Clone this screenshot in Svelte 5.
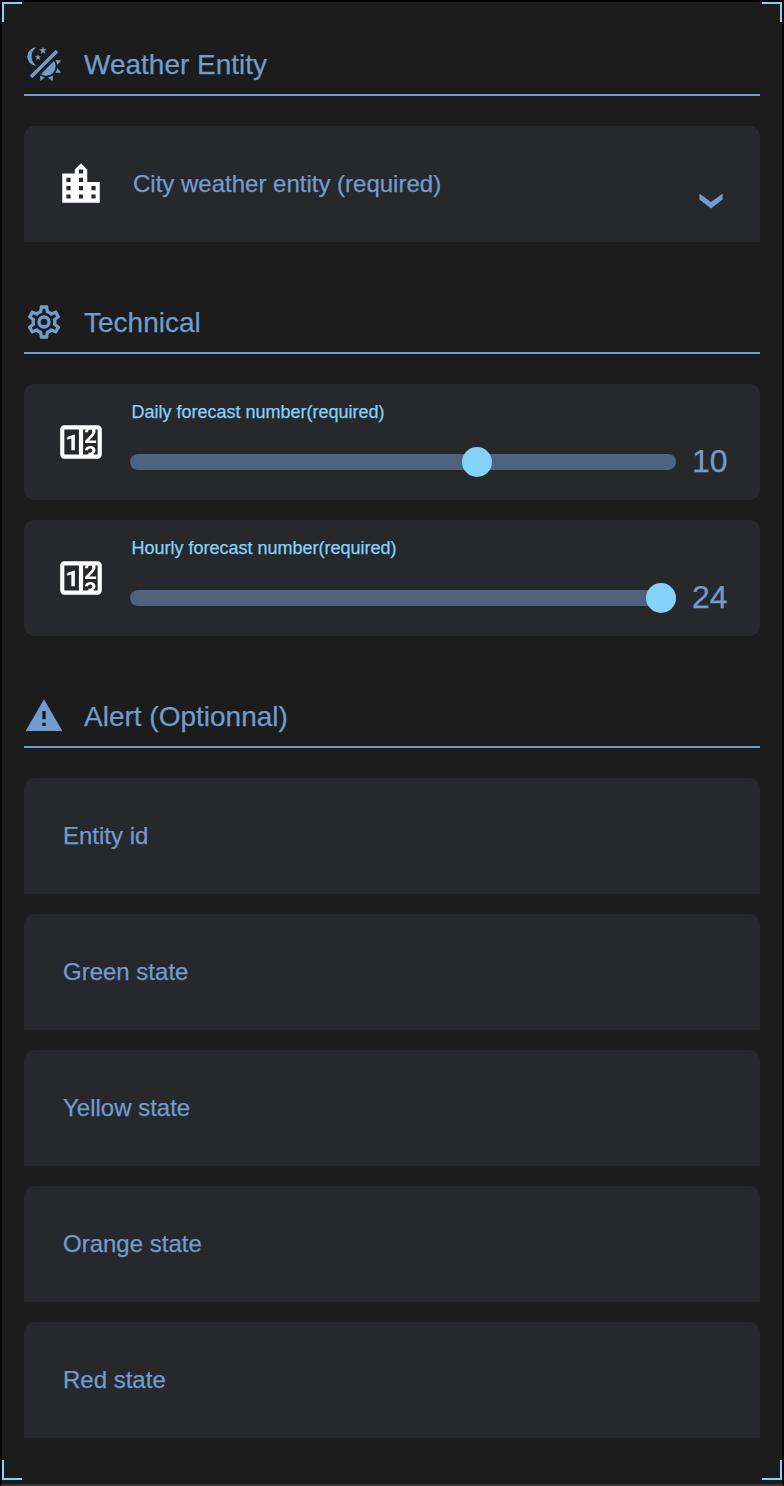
<script>
  const icons = {
    theme: 'M7.5,2C5.71,3.15 4.5,5.18 4.5,7.5C4.5,9.82 5.71,11.85 7.53,13C4.46,13 2,10.54 2,7.5A5.5,5.5 0 0,1 7.5,2M19.07,3.5L20.5,4.93L4.93,20.5L3.5,19.07L19.07,3.5M12.89,5.93L11.41,5L9.97,6L10.39,4.3L9,3.24L10.75,3.12L11.33,1.47L12,3.1L13.73,3.13L12.38,4.26L12.89,5.93M9.59,9.54L8.43,8.81L7.31,9.59L7.65,8.27L6.56,7.44L7.92,7.35L8.37,6.06L8.88,7.33L10.24,7.36L9.19,8.23L9.59,9.54M19,13.5A5.5,5.5 0 0,1 13.5,19C12.28,19 11.15,18.6 10.24,17.93L17.93,10.24C18.6,11.15 19,12.28 19,13.5M14.6,20.08L17.37,18.93L17.13,22.28L14.6,20.08M18.93,17.38L20.08,14.61L22.28,17.15L18.93,17.38M20.08,12.42L18.94,9.64L22.28,9.88L20.08,12.42M9.63,18.93L12.4,20.08L9.87,22.27L9.63,18.93Z',
    cog: 'M12,8A4,4 0 0,1 16,12A4,4 0 0,1 12,16A4,4 0 0,1 8,12A4,4 0 0,1 12,8M12,10A2,2 0 0,0 10,12A2,2 0 0,0 12,14A2,2 0 0,0 14,12A2,2 0 0,0 12,10M10,22C9.75,22 9.54,21.82 9.5,21.58L9.13,18.93C8.5,18.68 7.96,18.34 7.44,17.94L4.95,18.95C4.73,19.03 4.46,18.95 4.34,18.73L2.34,15.27C2.21,15.05 2.27,14.78 2.46,14.63L4.57,12.97L4.5,12L4.57,11L2.46,9.37C2.27,9.22 2.21,8.95 2.34,8.73L4.34,5.27C4.46,5.05 4.73,4.96 4.95,5.05L7.44,6.05C7.96,5.66 8.5,5.32 9.13,5.07L9.5,2.42C9.54,2.18 9.75,2 10,2H14C14.25,2 14.46,2.18 14.5,2.42L14.87,5.07C15.5,5.32 16.04,5.66 16.56,6.05L19.05,5.05C19.27,4.96 19.54,5.05 19.66,5.27L21.66,8.73C21.79,8.95 21.73,9.22 21.54,9.37L19.43,11L19.5,12L19.43,13L21.54,14.63C21.73,14.78 21.79,15.05 21.66,15.27L19.66,18.73C19.54,18.95 19.27,19.04 19.05,18.95L16.56,17.95C16.04,18.34 15.5,18.68 14.87,18.93L14.5,21.58C14.46,21.82 14.25,22 14,22H10M11.25,4L10.88,6.61C9.68,6.86 8.62,7.5 7.85,8.39L5.44,7.35L4.69,8.65L6.8,10.2C6.4,11.37 6.4,12.64 6.8,13.8L4.68,15.36L5.43,16.66L7.86,15.62C8.63,16.5 9.68,17.14 10.87,17.38L11.24,20H12.76L13.13,17.39C14.32,17.14 15.37,16.5 16.14,15.62L18.57,16.66L19.32,15.36L17.2,13.81C17.6,12.64 17.6,11.37 17.2,10.2L19.31,8.65L18.56,7.35L16.15,8.39C15.38,7.5 14.32,6.86 13.12,6.62L12.75,4H11.25Z',
    alert: 'M13 14H11V9H13M13 18H11V16H13M1 21H23L12 2L1 21Z',
    city: 'M15 11V5l-3-3-3 3v2H3v14h18V11h-6zm-8 8H5v-2h2v2zm0-4H5v-2h2v2zm0-4H5V9h2v2zm6 8h-2v-2h2v2zm0-4h-2v-2h2v2zm0-4h-2V9h2v2zm0-4h-2V5h2v2zm6 12h-2v-2h2v2zm0-4h-2v-2h2v2z',
    counter: 'M4,4H20A2,2 0 0,1 22,6V18A2,2 0 0,1 20,20H4A2,2 0 0,1 2,18V6A2,2 0 0,1 4,4M4,6V18H11V6H4M20,18V6H18.76C19,6.54 18.95,7.07 18.95,7.13C18.88,7.8 18.41,8.5 18.24,8.75L15.91,11.3L19.23,11.28L19.24,12.5L14.04,12.47L14,11.47C14,11.47 17.05,8.24 17.2,7.95C17.34,7.67 17.91,6 16.5,6C15.27,6.05 15.41,7.3 15.41,7.3L13.87,7.31C13.87,7.31 13.88,6.65 14.25,6H13V18H15.58L15.57,17.14L16.54,17.13C16.54,17.13 17.45,16.97 17.46,16.08C17.5,15.08 16.65,15.08 16.5,15.08C16.37,15.08 15.43,15.13 15.43,15.95H13.91C13.91,15.95 13.95,13.89 16.5,13.89C19.1,13.89 18.96,15.91 18.96,15.91C18.96,15.91 19,17.16 17.85,17.63L18.37,18H20M9.05,16H7.35V10.3L5.4,10.9V9.58L8.8,8.41H9.05V16Z'
  };
  const sliders = [
    { label: 'Daily forecast number(required)', value: 10, left: 332 },
    { label: 'Hourly forecast number(required)', value: 24, left: 516 }
  ];
  const states = ['Entity id', 'Green state', 'Yellow state', 'Orange state', 'Red state'];
</script>

{#snippet heading(icon, title)}
  <h2>
    <svg class="head-icon" viewBox="0 0 24 24"><path d={icons[icon]} /></svg>
    <span>{title}</span>
  </h2>
{/snippet}

<main>
  <i class="corner tl"></i><i class="corner tr"></i>
  <i class="corner bl"></i><i class="corner br"></i>

  <section>
    {@render heading('theme', 'Weather Entity')}
    <div class="card field select">
      <svg class="icon" viewBox="0 0 24 24"><path d={icons.city} /></svg>
      <span class="text">City weather entity (required)</span>
      <svg class="chevron" viewBox="0 0 24 16"><path d="M.4 .6 12 9 23.6 .6V6.6L12 15.6 .4 6.6Z" /></svg>
    </div>
  </section>

  <section>
    {@render heading('cog', 'Technical')}
    {#each sliders as s}
      <div class="card slider">
        <svg class="icon" viewBox="0 0 24 24"><path d={icons.counter} /></svg>
        <div class="control">
          <span class="label">{s.label}</span>
          <div class="row">
            <div class="track"><div class="thumb" style="left: {s.left}px"></div></div>
            <span class="value">{s.value}</span>
          </div>
        </div>
      </div>
    {/each}
  </section>

  <section>
    {@render heading('alert', 'Alert (Optionnal)')}
    {#each states as s}
      <div class="card field"><span class="text">{s}</span></div>
    {/each}
  </section>
</main>

<style>
  :global(body) { background: #000; }
  main {
    position: relative;
    box-sizing: border-box;
    height: 1486px;
    padding: 32px 22px 0;
    border: 2px solid #000;
    border-bottom-color: #333335;
    background: #1c1c1c;
    font-family: "Liberation Sans", Arial, sans-serif;
    color: #709ccf;
    -webkit-text-stroke: 0.25px currentColor;
  }
  .corner { position: absolute; box-sizing: border-box; width: 20px; height: 20px; border: 0 solid #83d3f9; }
  .tl { top: 0; left: 0; border-width: 2px 0 0 2px; }
  .tr { top: 0; right: 0; border-width: 2px 2px 0 0; }
  .bl { bottom: 4px; left: 0; border-width: 0 0 2px 2px; }
  .br { bottom: 4px; right: 0; border-width: 0 2px 2px 0; }
  section { display: flex; flex-direction: column; gap: 20px; margin-bottom: 50px; }
  h2 {
    display: flex;
    align-items: center;
    box-sizing: border-box;
    height: 62px;
    margin: 0 0 10px;
    border-bottom: 2px solid #709ccf;
    font-size: 28px;
    font-weight: 400;
    line-height: 32px;
  }
  h2 span { padding-top: 2px; }
  svg { flex: none; fill: currentColor; }
  .head-icon { width: 40px; height: 40px; margin-right: 20px; }
  .card { display: flex; box-sizing: border-box; height: 116px; border-radius: 10px; background: #27282c; }
  .field { align-items: center; padding: 0 37px 0 39px; border-radius: 10px 10px 0 0; }
  .select { padding-left: 32px; }
  .icon { width: 50px; height: 50px; color: #fff; }
  .text { font-size: 24px; line-height: 28px; white-space: nowrap; }
  .select .text { margin-left: 27px; }
  .chevron { width: 24px; height: 16px; margin: 33px 0 0 auto; }
  .slider { align-items: center; padding-left: 32px; }
  .control { display: flex; flex-direction: column; margin-left: 24px; height: 116px; padding-top: 18px; box-sizing: border-box; }
  .label { margin-left: 1.5px; font-size: 18px; line-height: 20px; color: #83d3f9; white-space: nowrap; -webkit-text-stroke-color: #83d3f9; }
  .row { display: flex; align-items: center; height: 36px; margin-top: 22px; }
  .track { position: relative; width: 546px; height: 16px; border-radius: 8px; background: #4d637f; }
  .thumb { position: absolute; top: -7px; width: 30px; height: 30px; border-radius: 50%; background: #83d3f9; }
  .value { margin-left: 16px; padding-bottom: 2px; font-size: 32px; line-height: 36px; }
</style>
